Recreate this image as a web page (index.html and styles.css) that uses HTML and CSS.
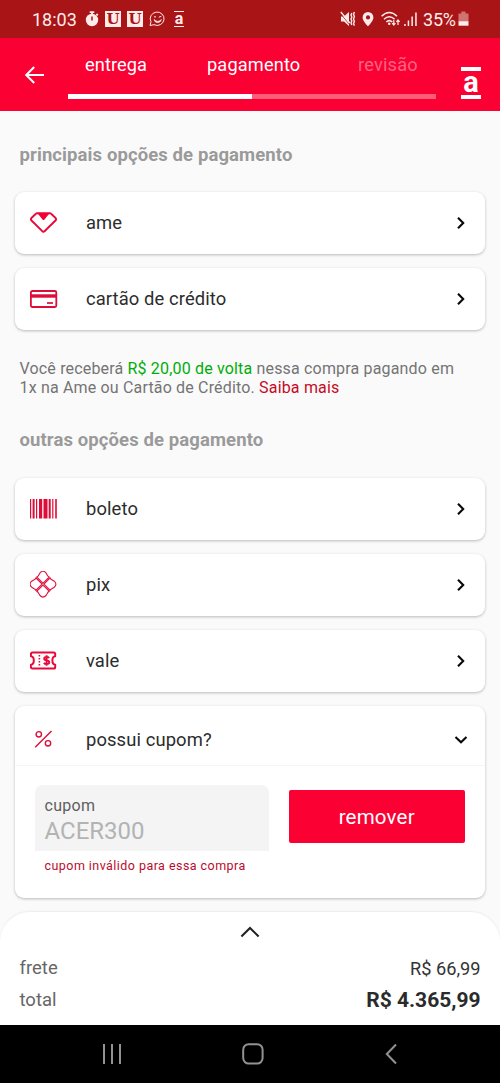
FILE: index.html
```html
<!DOCTYPE html>
<html lang="pt-BR">
<head>
<meta charset="utf-8">
<meta name="viewport" content="width=device-width, initial-scale=1">
<title>pagamento</title>
<link rel="stylesheet" href="styles.css">
</head>
<body>
<div class="app">
  <div class="status">
    <div class="status-left">
      <span class="clock">18:03</span>
      <svg class="ic-timer" width="14" height="16" viewBox="0 0 14 16"><circle cx="7" cy="9" r="6.2" fill="#ffecea"/><path d="M4.7 1.2h4.6M7 1v3M11.4 3l1.4 1.4" stroke="#ffecea" stroke-width="1.8"/><path d="M7 5.4v4" stroke="#a91417" stroke-width="1.5"/></svg>
      <span class="badge-u">U</span>
      <span class="badge-u">U</span>
      <svg class="ic-chat" width="17" height="16" viewBox="0 0 17 16" fill="none" stroke="#ffecea" stroke-width="1"><path d="M1 14.5l1-3.7A6.9 6.7 0 1 1 5 13.7z"/><path d="M5 8.6q3.7 3.6 7.4 0-.8 3-3.7 3T5 8.6z" fill="#ffecea" stroke-width=".7"/><path d="M5 6.2q1-1.3 2 0M9.8 6.2l2.6-.9"/></svg>
      <span class="mini-a">a</span>
    </div>
    <div class="status-right">
      <svg width="16" height="16" viewBox="0 0 16 16" fill="none" stroke="#ffecea"><path d="M1 5.5h3L9 1v14l-5-4.5H1z" fill="#ffecea" stroke="none"/><path d="M0 2l9.5 11.5" stroke="#a91417" stroke-width=".8"/><path d="M.8 1l9 11" stroke-width="1.4"/><path d="M11.8 2l-.8 2 .8 2-.8 2 .8 2-.8 2 .8 2M14.4 1l-.9 2.2.9 2.2-.9 2.6.9 2.4-.9 2.2.9 2" stroke-width="1.4"/></svg>
      <svg class="ic-pin" width="12" height="16" viewBox="0 0 12 16"><path fill="#ffecea" fill-rule="evenodd" d="M6 1a5.4 5.4 0 0 0-5.4 5.4C.6 10 6 15.2 6 15.2s5.4-5.2 5.4-8.8A5.4 5.4 0 0 0 6 1zm0 3.3a2.1 2.1 0 1 1 0 4.2 2.1 2.1 0 0 1 0-4.2z"/></svg>
      <svg class="ic-wifi" width="20" height="16" viewBox="0 0 20 16" fill="none" stroke="#ffecea" stroke-width="1.5"><path d="M.6 5.2q7.7-7.4 15.4 0M3 8.2q5.3-5 10.6 0M5.3 11q3-2.8 6 0"/><circle cx="8.2" cy="12.7" r="1.3" fill="#ffecea" stroke="none"/><path d="M12.8 9v5M11.2 12.2l1.6 1.9 1.6-1.9M17 14V9M15.4 10.8L17 9l1.6 1.8" stroke-width="1.2"/></svg>
      <svg class="ic-signal" width="14" height="16" viewBox="0 0 14 16" fill="#ffecea"><path d="M.2 13h1.5v2H.2zM3.7 9.5h1.5V15H3.7zM7.4 5.5h1.5V15H7.4zM11.2 1.5h1.5V15h-1.5z"/></svg>
      <span class="percent">35%</span>
      <svg class="ic-battery" width="11" height="16" viewBox="0 0 11 16"><path fill="#cf7471" d="M3.3.5h4.2v2h3v8H.5v-8h2.8z"/><path fill="#ffecea" d="M.5 10.2h10v4.5H.5z"/></svg>
    </div>
  </div>

  <header class="header">
    <svg class="back" width="22" height="20" viewBox="0 0 22 20" fill="none" stroke="#fff" stroke-width="2"><path d="M21 10H3M11.2 2L3.2 10l8 8"/></svg>
    <div class="steps">
      <div class="step-labels"><span class="s1">entrega</span><span class="s2">pagamento</span><span class="s3">revisão</span></div>
      <div class="track"><div class="track-fill"></div></div>
    </div>
    <div class="brand"><span>a</span></div>
  </header>

  <main class="content">
    <h2 class="title title-main">principais opções de pagamento</h2>
    <div class="card row">
      <svg class="icon" width="28" height="28" viewBox="0 0 28 28" fill="none" stroke="#e7093a" stroke-width="1.9" stroke-linejoin="round"><path d="M7.2 4.2h12.6q.8 0 1.3.5l4.500 4.300q1 1.300-.1 2.500L14.500 22.300q-1 1-2 0L1.500 11.500Q.4 10.300 1.400 9l4.500-4.300q.5-.5 1.300-.5z"/><path d="M7.200 4.200h12.600l-1.500 1.500-3.800 4.900q-1 1-2 0L8.700 5.700z" fill="#f50030" stroke="none"/></svg>
      <span class="label">ame</span>
      <svg class="chev" width="10" height="14" viewBox="0 0 10 14"><path d="M2 1.800L7.200 7 2 12.200"/></svg>
    </div>
    <div class="card row">
      <svg class="icon" width="28" height="28" viewBox="0 0 28 28" fill="none" stroke="#df0b38" stroke-width="1.800"><rect x=".9" y="6" width="25.400" height="16" rx="1.500"/><path d="M1 11h25.400" stroke-width="3.400"/><path d="M17 18h6" stroke-width="1.700"/></svg>
      <span class="label">cartão de crédito</span>
      <svg class="chev" width="10" height="14" viewBox="0 0 10 14"><path d="M2 1.800L7.200 7 2 12.200"/></svg>
    </div>
    <p class="note"><span class="line">Você receberá <b>R$ 20,00 de volta</b> nessa compra pagando em</span><span class="line">1x na Ame ou Cartão de Crédito. <i>Saiba mais</i></span></p>
    <h2 class="title title-other">outras opções de pagamento</h2>
    <div class="card row">
      <svg class="icon" width="28" height="28" viewBox="0 0 28 28" fill="#df0b38"><path d="M0 4h1.200v19.500H0zM2.600 4h2v19.500h-2zM6 4h1.200v19.500H6zM9 4h3.200v19.500H9zM13.500 4h4v19.500h-4zM18.700 4h2v19.500h-2zM22.200 4h1.200v19.500h-1.200zM25.200 4h1.600v19.500h-1.600z"/></svg>
      <span class="label">boleto</span>
      <svg class="chev" width="10" height="14" viewBox="0 0 10 14"><path d="M2 1.800L7.200 7 2 12.200"/></svg>
    </div>
    <div class="card row">
      <svg class="icon" width="28" height="28" viewBox="0 0 28 28" fill="none" stroke="#e20d3b" stroke-width="1.100" stroke-linejoin="round"><g transform="translate(13 13.200)"><path id="petal" d="M0-.9L-6.300-7.200Q-5-7.500-4.200-9.200L-3-11.300Q0-14.500 3-11.300L4.200-9.200Q5-7.500 6.300-7.200Z"/><use href="#petal" transform="rotate(90)"/><use href="#petal" transform="rotate(180)"/><use href="#petal" transform="rotate(270)"/></g></svg>
      <span class="label">pix</span>
      <svg class="chev" width="10" height="14" viewBox="0 0 10 14"><path d="M2 1.800L7.200 7 2 12.200"/></svg>
    </div>
    <div class="card row">
      <svg class="icon" width="28" height="28" viewBox="0 0 28 28" fill="none" stroke="#e7093a" stroke-width="2" stroke-linejoin="round"><path d="M2.400 5.500h21.200q1.600 0 1.600 1.600v2.200Q22.400 9.500 22.400 13.500t2.800 4.200v2.200q0 1.600-1.600 1.600H2.400Q.9 21.500.9 19.900v-2.200Q3.800 17.500 3.800 13.500T.9 9.300V7.100Q.9 5.500 2.400 5.500z"/><path d="M9.400 8v11.500" stroke-width="1.600" stroke-dasharray="1.600 1.400"/><path d="M19.300 10.900q-1-.9-2.700-.9-2.400 0-2.400 1.700 0 1.400 2.400 1.700 2.700.4 2.700 1.900 0 1.800-2.700 1.800-1.800 0-2.800-1.100M16.600 8.300v10.400" stroke-width="1.900"/></svg>
      <span class="label">vale</span>
      <svg class="chev" width="10" height="14" viewBox="0 0 10 14"><path d="M2 1.800L7.200 7 2 12.200"/></svg>
    </div>
    <section class="card coupon">
      <div class="row coupon-head">
        <svg class="icon" width="28" height="28" viewBox="0 0 28 28" fill="none" stroke="#d90f3b" stroke-width="1.400"><path d="M5.200 21.300L21.500 5"/><circle cx="8.800" cy="8.300" r="2.700"/><circle cx="18" cy="17.300" r="2.700"/></svg>
        <span class="label">possui cupom?</span>
        <svg class="chev chev-down" width="14" height="10" viewBox="0 0 14 10"><path d="M1.500 2L7 7.300 12.500 2"/></svg>
      </div>
      <div class="coupon-body">
        <div class="field-col">
          <div class="field"><span class="field-label">cupom</span><span class="field-value">ACER300</span></div>
          <div class="error">cupom inválido para essa compra</div>
        </div>
        <div class="remove">remover</div>
      </div>
    </section>
  </main>

  <footer class="summary">
    <svg class="handle" width="20" height="12" viewBox="0 0 20 12" fill="none" stroke="#222" stroke-width="2.100"><path d="M1.400 10.400L10 2l8.600 8.400"/></svg>
    <div class="sum-row"><span>frete</span><span class="frete-value">R$ 66,99</span></div>
    <div class="sum-row sum-total"><span>total</span><strong>R$ 4.365,99</strong></div>
  </footer>

  <nav class="nav">
    <svg width="20" height="22" viewBox="0 0 20 22" stroke="#929292" stroke-width="2"><path d="M2 1v20M10 1v20M18 1v20"/></svg>
    <svg width="22" height="22" viewBox="0 0 22 22" fill="none" stroke="#929292" stroke-width="2"><rect x="1.200" y="1.200" width="19.400" height="19.400" rx="5.500"/></svg>
    <svg class="nav-back" width="12" height="22" viewBox="0 0 12 22" fill="none" stroke="#929292" stroke-width="2"><path d="M11 1.500L1.800 11l9.200 9.500"/></svg>
  </nav>
</div>
</body>
</html>
```
FILE: styles.css
```css
* { box-sizing: border-box; }
body { margin: 0; font-family: Roboto, sans-serif; color: #2c2c2c; background: #fafafa; }
svg { display: block; flex: none; }
.app { width: 500px; height: 1083px; display: flex; flex-direction: column; overflow: hidden; background: #fafafa; }

.status { height: 38px; flex: none; background: #a91417; color: #ffecea; display: flex; justify-content: space-between; padding: 0 31px 0 32px; }
.status-left, .status-right { display: flex; align-items: center; }
.clock { width: 53px; font-size: 18px; line-height: 38px; padding-top: 2px; }
.ic-timer { margin-right: 6px; }
.badge-u { width: 16px; height: 16px; margin-right: 6px; background: #ffecea; color: #a91417; font: bold 15px/16px "DejaVu Serif", serif; display: flex; justify-content: center; }
.ic-chat { margin-right: 8px; }
.mini-a { width: 10px; height: 16px; border-top: 1.5px solid #ffecea; border-bottom: 1.5px solid #ffecea; font-weight: 700; font-size: 16px; line-height: 13px; text-align: center; }
.ic-pin { margin-left: 6px; }
.ic-wifi { margin-left: 7px; }
.ic-signal { margin-left: 3px; }
.percent { margin-left: 5px; width: 35px; font-size: 18px; letter-spacing: -.2px; line-height: 38px; padding-top: 2px; white-space: nowrap; }

.header { height: 73px; flex: none; background: #fb0032; color: #fff; display: flex; padding: 0 19px 0 23px; }
.back { margin-top: 27px; }
.steps { width: 368px; margin-left: 23px; }
.step-labels { display: flex; height: 56px; padding-top: 16px; font-size: 18.2px; line-height: 22px; white-space: nowrap; }
.s1 { margin-left: 17px; width: 122px; letter-spacing: .1px; }
.s2 { width: 151px; letter-spacing: .15px; }
.s3 { color: #ff6482; letter-spacing: .2px; }
.track { height: 5px; background: #ff5c79; }
.track-fill { height: 5px; width: 184px; background: #fff; }
.brand { width: 20px; height: 32px; margin: 29px 0 0 25px; border-top: 4px solid #fff; border-bottom: 4px solid #fff; font-size: 29px; font-weight: 700; line-height: 22px; text-align: center; }

.content { height: 801px; flex: none; padding: 33px 15px 0; }
.title { margin: 0 0 0 4.5px; font-size: 18.5px; letter-spacing: .1px; line-height: 22px; font-weight: 700; color: #9a9a9a; white-space: nowrap; }
.title-main { margin-bottom: 26px; }
.title-other { margin-top: 32px; margin-bottom: 27px; }
.card { background: #fff; border-radius: 9px; box-shadow: 0 1px 3px rgba(0,0,0,.26); margin-bottom: 14px; }
.row { height: 62px; display: flex; align-items: center; padding: 0 20px 0 15px; }
.icon { margin-right: 28px; }
.label { flex: 1; font-size: 18.4px; line-height: 24px; letter-spacing: .1px; }
.chev { fill: none; stroke: #080808; stroke-width: 2.1; margin-right: -1px; }
.chev-down { margin-right: -2.5px; margin-top: -1px; }
.note { margin: 28.5px 4.5px 0; font-size: 16px; line-height: 19px; letter-spacing: .17px; color: #747474; }
.line { display: block; white-space: nowrap; }
.note b { font-weight: 400; color: #00ad09; }
.note i { font-style: normal; color: #c60b24; }
.coupon { height: 192px; }
.coupon-head { height: 60px; padding-top: 10px; border-bottom: 1px solid #f5f5f5; }
.coupon-body { display: flex; gap: 20px; padding: 19.5px 19.5px 0; }
.field-col { width: 234px; }
.field { height: 66px; padding: 10px 10px 0; background: #f4f4f4; border-radius: 8px 8px 0 0; display: flex; flex-direction: column; }
.field-label { font-size: 16px; line-height: 22px; color: #5f5f5f; letter-spacing: .3px; }
.field-value { font-size: 24px; line-height: 28px; color: #b3b3b3; }
.error { margin: 6px 10px; font-size: 12.5px; line-height: 17px; color: #ba0c2b; white-space: nowrap; letter-spacing: .45px; }
.remove { width: 176.5px; height: 53px; margin-top: 5px; background: #fb0032; color: #fff; border-radius: 2px; font-size: 20.5px; line-height: 55px; text-align: center; letter-spacing: .2px; }

.summary { height: 113px; flex: none; background: #fff; border-radius: 30px 30px 0 0; box-shadow: 0 -1px 2px rgba(0,0,0,.06); padding: 14px 19.5px 0; display: flex; flex-direction: column; }
.handle { align-self: center; margin-left: -1px; }
.sum-row { display: flex; justify-content: space-between; align-items: center; margin-top: 18px; height: 24px; font-size: 18.5px; color: #666; }
.sum-total { margin-top: 7.5px; }
.frete-value { color: #333; font-size: 18.2px; }
.sum-row strong { font-size: 21px; color: #2b2b2b; }
.nav { height: 58px; flex: none; background: #000; display: grid; grid-template-columns: 20px 22px 12px; column-gap: 119.5px; align-items: center; padding-left: 102px; }
.nav-back { margin-left: 2px; }
```
